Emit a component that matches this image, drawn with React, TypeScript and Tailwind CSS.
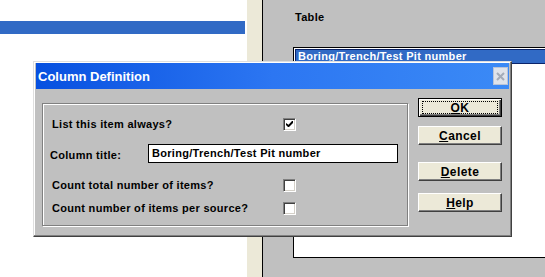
import React from 'react';

const sunken =
  'border border-t-[#808080] border-l-[#808080] border-r-white border-b-white shadow-[inset_1px_1px_0_#404040,inset_-1px_-1px_0_#d4d0c8]';

const Checkbox: React.FC<{ checked?: boolean }> = ({ checked }) => (
  <div className={`w-[13px] h-[13px] bg-white flex items-center justify-center ${sunken}`}>
    {checked && (
      <svg width="7" height="7" viewBox="0 0 7 7">
        <path d="M0 2 L0 4 L2 6 L3 6 L7 2 L7 0 L6 0 L2.5 3.8 Z" fill="#000" />
      </svg>
    )}
  </div>
);

const WinButton: React.FC<{ hot: string; rest: string; isDefault?: boolean; className?: string }> = ({
  hot,
  rest,
  isDefault,
  className = '',
}) => (
  <div
    className={`w-[84px] h-[19px] bg-[#ece9d8] flex items-center justify-center text-[12px] font-bold tracking-[0.4px] ${
      isDefault
        ? 'border border-black shadow-[inset_1px_1px_0_#fff,inset_-1px_-1px_0_#404040,inset_-2px_-2px_0_#808080]'
        : 'border border-t-white border-l-white border-r-[#404040] border-b-[#404040] shadow-[inset_-1px_-1px_0_#808080]'
    } ${className}`}
  >
    {isDefault ? (
      <div className="w-[76px] h-[13px] border border-dotted border-black flex items-center justify-center">
        <span>
          <span className="underline underline-offset-1">{hot}</span>
          {rest}
        </span>
      </div>
    ) : (
      <span>
        <span className="underline underline-offset-1">{hot}</span>
        {rest}
      </span>
    )}
  </div>
);

export default function App() {
  return (
    <div className="relative w-[545px] h-[277px] overflow-hidden flex text-black font-['Liberation_Sans',Arial,sans-serif]">
      {/* Left pane */}
      <div className="w-[247px] shrink-0 bg-white pt-[21px]">
        <div className="h-[13px] w-[245px] bg-[#316ac5]" />
      </div>
      {/* Splitter */}
      <div className="w-[15px] shrink-0 bg-[#ece9d8]" />
      {/* Right pane */}
      <div className="flex-1 min-w-0 border-l border-black bg-[#c0c0c0] pl-[30px] pt-[10px]">
        <div className="h-[14px] text-[11px] font-bold tracking-[0.3px] leading-[14px] pl-[2px]">Table</div>
        <div className="mt-[23px] h-[211px] w-[270px] border border-black bg-white p-[1px]">
          <div className="h-[15px] bg-[#316ac5] border border-[#0a246a] text-white text-[11px] font-bold tracking-[0.3px] leading-[13px] pl-[2px] whitespace-nowrap">
            Boring/Trench/Test Pit number
          </div>
        </div>
      </div>

      {/* Dialog */}
      <div className="absolute left-[33px] top-[61px] w-[479px] h-[176px] bg-[#c0c0c0] border border-t-[#dfdfdf] border-l-[#dfdfdf] border-r-[#404040] border-b-[#404040] shadow-[inset_-1px_-1px_0_#808080,inset_1px_1px_0_#fff] px-[2px] pt-[1px]">
        <div className="h-[26px] flex items-center justify-between bg-gradient-to-r from-[#0650e0] via-[#2c76f2] to-[#3b8af6] pl-[2px] pr-[1px]">
          <span className="text-white text-[13px] font-bold leading-none">Column Definition</span>
          <div className="w-[15px] h-[18px] bg-[#dfe3ea] border border-[#b9c4d8] flex items-center justify-center">
            <svg width="9" height="9" viewBox="0 0 9 9">
              <path d="M1 1 L8 8 M8 1 L1 8" stroke="#a3abb8" strokeWidth="2" />
            </svg>
          </div>
        </div>

        <div className="flex pl-[6px]">
          {/* Group box */}
          <div className="mt-[14px] w-[366px] h-[123px] border border-[#808080] shadow-[inset_1px_1px_0_#fff,1px_1px_0_#fff] pl-[9px] pt-[13px] text-[11px] font-bold tracking-[0.3px]">
            <div className="h-[14px] flex items-center">
              <span className="w-[231px]">List this item always?</span>
              <Checkbox checked />
            </div>
            <div className="mt-[13px] h-[19px] flex items-center">
              <span className="w-[98px] -ml-[2px] pt-[4px]">Column title:</span>
              <div className="w-[250px] h-[19px] bg-white border border-black flex items-center pl-[3px]">
                Boring/Trench/Test Pit number
              </div>
            </div>
            <div className="mt-[16px] h-[13px] flex items-center">
              <span className="w-[231px]">Count total number of items?</span>
              <Checkbox />
            </div>
            <div className="mt-[10px] h-[13px] flex items-center">
              <span className="w-[231px]">Count number of items per source?</span>
              <Checkbox />
            </div>
          </div>

          {/* Buttons */}
          <div className="ml-[10px] mt-[9px] flex flex-col">
            <WinButton hot="O" rest="K" isDefault />
            <WinButton hot="C" rest="ancel" className="mt-[9px]" />
            <WinButton hot="D" rest="elete" className="mt-[17px]" />
            <WinButton hot="H" rest="elp" className="mt-[12px]" />
          </div>
        </div>
      </div>
    </div>
  );
}
